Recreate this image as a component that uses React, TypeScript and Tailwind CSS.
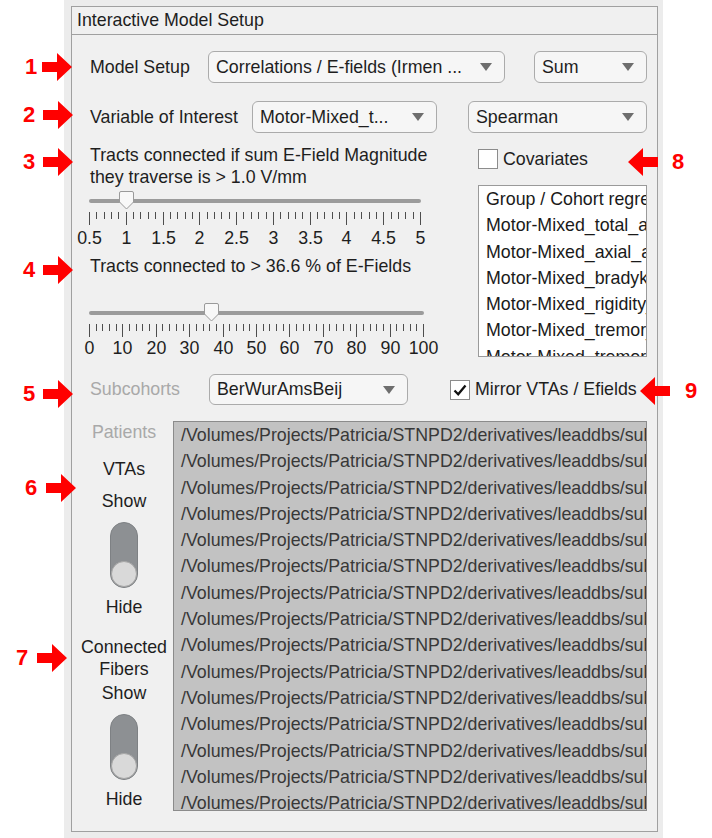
import React from 'react';

const PATH = '/Volumes/Projects/Patricia/STNPD2/derivatives/leaddbs/sub-';

const covariates = [
  'Group / Cohort regression',
  'Motor-Mixed_total_abs',
  'Motor-Mixed_axial_abs',
  'Motor-Mixed_bradykinesia_abs',
  'Motor-Mixed_rigidity_abs',
  'Motor-Mixed_tremor_abs',
  'Motor-Mixed_tremor_rest',
];

// red callouts that sit on top of the screenshot
const annots = [
  { n: '1', num: 'left-[25px] top-[53px]', arrow: 'left-[42px] top-[53px]', dir: 'r' },
  { n: '2', num: 'left-[23px] top-[101px]', arrow: 'left-[43px] top-[101px]', dir: 'r' },
  { n: '3', num: 'left-[23px] top-[148px]', arrow: 'left-[43px] top-[148px]', dir: 'r' },
  { n: '4', num: 'left-[23px] top-[256px]', arrow: 'left-[43px] top-[256px]', dir: 'r' },
  { n: '5', num: 'left-[23px] top-[380px]', arrow: 'left-[43px] top-[380px]', dir: 'r' },
  { n: '6', num: 'left-[25px] top-[474px]', arrow: 'left-[46px] top-[474px]', dir: 'r' },
  { n: '7', num: 'left-[16px] top-[644px]', arrow: 'left-[37px] top-[644px]', dir: 'r' },
  { n: '8', num: 'left-[672px] top-[148px]', arrow: 'left-[628px] top-[148px]', dir: 'l' },
  { n: '9', num: 'left-[685px] top-[377px]', arrow: 'left-[640px] top-[377px]', dir: 'l' },
];

function Arrow({ dir }: { dir: string }) {
  const pts = dir === 'r' ? '0,9 15,9 15,0 30,14 15,28 15,19 0,19' : '30,9 15,9 15,0 0,14 15,28 15,19 30,19';
  return (
    <svg width="30" height="28" viewBox="0 0 30 28">
      <polygon points={pts} fill="#ff0000" />
    </svg>
  );
}

function Caret() {
  return (
    <svg width="12" height="8" viewBox="0 0 12 8" className="shrink-0">
      <path d="M0 0 H12 L6 8 Z" fill="#6e6e6e" />
    </svg>
  );
}

function Dropdown({ text, className }: { text: string; className: string }) {
  return (
    <div className={`flex items-center h-full rounded-[6px] border border-[#ababab] bg-[#f6f6f6] pl-[7px] pr-[12px] ${className}`}>
      <span className="flex-1 whitespace-nowrap overflow-hidden">{text}</span>
      <Caret />
    </div>
  );
}

function Checkbox({ checked = false }: { checked?: boolean }) {
  return (
    <div className="w-[20px] h-[20px] shrink-0 border border-[#8c8c8c] bg-white flex items-center justify-center">
      {checked && (
        <svg width="16" height="16" viewBox="0 0 16 16">
          <path d="M2.5 8.5 L6.2 12.2 L13.5 3.5" fill="none" stroke="#111" strokeWidth="2.3" />
        </svg>
      )}
    </div>
  );
}

function Toggle() {
  return (
    <div className="w-[28px] h-[66px] rounded-full bg-[#8d9093] border border-[#7e8184] flex flex-col justify-end items-center">
      <div className="w-[26px] h-[26px] rounded-full bg-[#d9d9d9] border border-[#a6a6a6]" />
    </div>
  );
}

interface SliderProps {
  span: number;
  labels: string[];
  frac: number;
  boxClass: string;
  labelClass: string;
}

function Slider({ span, labels, frac, boxClass, labelClass }: SliderProps) {
  const majors = labels.length - 1;
  const total = majors * 5;
  const ticks = [];
  for (let i = 0; i <= total; i++) {
    const x = Math.round((i * span) / total) + 0.5;
    const major = i % 5 === 0;
    ticks.push(<line key={i} x1={x} x2={x} y1={21} y2={major ? 34 : 28} stroke="#4d4d4d" strokeWidth={1} />);
  }
  const tx = Math.round(frac * span) + 0.5;
  return (
    <div className={`relative w-[350px] -ml-[1px] ${boxClass}`}>
      <svg width={span + 4} height={36} className="absolute left-0 top-0 overflow-visible">
        <rect x={0} y={8} width={span + 1} height={4} rx={2} fill="#9b9b9b" />
        {ticks}
        <path
          d={`M${tx - 7} 2 Q${tx - 7} 0.5 ${tx - 5.5} 0.5 H${tx + 5.5} Q${tx + 7} 0.5 ${tx + 7} 2 V11 L${tx} 18 L${tx - 7} 11 Z`}
          fill="#f8f8f8"
          stroke="#9a9a9a"
        />
      </svg>
      {labels.map((l, i) => (
        <span
          key={l}
          className={`absolute leading-[20px] -translate-x-1/2 whitespace-nowrap ${labelClass}`}
          style={{ left: Math.round((i * span) / majors) + 0.5 }}
        >
          {l}
        </span>
      ))}
    </div>
  );
}

export default function App() {
  return (
    <div className="relative w-[712px] h-[838px] bg-white overflow-hidden font-['Liberation_Sans',Arial,Helvetica,sans-serif] text-[17.8px] text-[#1e1e1e]">
      <div className="ml-[64px] w-[599px] h-[838px] bg-[#ececec] pt-[6px] pl-[7px]">
        <div className="w-[587px] h-[826px] border border-[#a0a0a0] bg-[#f0f0f0] flex flex-col">
          <div className="h-[28px] border-b border-[#a0a0a0] pl-[5px] flex items-center">Interactive Model Setup</div>

          <div className="pl-[18px] pr-[10px] flex flex-col">
            {/* model setup */}
            <div className="mt-[16px] h-[32px] flex items-center">
              <div className="w-[118px]">Model Setup</div>
              <Dropdown text="Correlations / E-fields (Irmen ..." className="w-[297px]" />
              <Dropdown text="Sum" className="w-[113px] ml-[29px]" />
            </div>

            {/* variable of interest */}
            <div className="mt-[18px] h-[32px] flex items-center">
              <div className="w-[162px]">Variable of Interest</div>
              <Dropdown text="Motor-Mixed_t..." className="w-[185px]" />
              <Dropdown text="Spearman" className="w-[179px] ml-[31px]" />
            </div>

            {/* thresholds + covariates */}
            <div className="h-[225px] flex">
              <div className="w-[350px] flex flex-col">
                <div className="mt-[11px] leading-[22px]">
                  Tracts connected if sum E-Field Magnitude
                  <br />
                  they traverse is &gt; 1.0 V/mm
                </div>
                <div className="mt-[3px]">
                  <Slider
                    span={331}
                    labels={['0.5', '1', '1.5', '2', '2.5', '3', '3.5', '4', '4.5', '5']}
                    frac={0.5 / 4.5}
                    boxClass="h-[57px]"
                    labelClass="top-[37px]"
                  />
                </div>
                <div className="mt-[7px] leading-[22px]">Tracts connected to &gt; 36.6 % of E-Fields</div>
                <div className="mt-[26px]">
                  <Slider
                    span={334}
                    labels={['0', '10', '20', '30', '40', '50', '60', '70', '80', '90', '100']}
                    frac={0.366}
                    boxClass="h-[55px]"
                    labelClass="top-[35px]"
                  />
                </div>
              </div>

              <div className="ml-[38px] w-[169px] flex flex-col">
                <div className="mt-[16px] h-[20px] flex items-center gap-[5px]">
                  <Checkbox />
                  <span>Covariates</span>
                </div>
                <div className="mt-[16px] h-[172px] border border-[#9a9a9a] bg-white overflow-hidden">
                  {covariates.map((c) => (
                    <div key={c} className="h-[26.3px] leading-[26.3px] pl-[7px] whitespace-nowrap text-[#1a1a1a]">
                      {c}
                    </div>
                  ))}
                </div>
              </div>
            </div>

            {/* subcohorts */}
            <div className="mt-[16px] h-[31px] flex items-center">
              <div className="w-[119px] text-[#a9a9a9]">Subcohorts</div>
              <Dropdown text="BerWurAmsBeij" className="w-[199px]" />
              <div className="ml-[42px] flex items-center gap-[5px]">
                <Checkbox checked />
                <span>Mirror VTAs / Efields</span>
              </div>
            </div>

            {/* patients */}
            <div className="mt-[16px] -ml-[18px] flex">
              <div className="w-[101px] pl-[3px] flex flex-col items-center leading-[22px]">
                <div className="text-[#a9a9a9]">Patients</div>
                <div className="mt-[15px]">VTAs</div>
                <div className="mt-[10px]">Show</div>
                <div className="mt-[10px]">
                  <Toggle />
                </div>
                <div className="mt-[8px]">Hide</div>
                <div className="mt-[18px]">Connected</div>
                <div>Fibers</div>
                <div className="mt-[2px]">Show</div>
                <div className="mt-[10px]">
                  <Toggle />
                </div>
                <div className="mt-[8px]">Hide</div>
              </div>
              <div className="w-[474px] h-[390px] border border-[#8b8b8b] bg-[#c2c2c2] overflow-hidden">
                {Array.from({ length: 15 }).map((_, i) => (
                  <div key={i} className="h-[26.3px] leading-[26.3px] pl-[7px] whitespace-nowrap text-[#383838]">
                    {PATH + String(i + 1).padStart(3, '0')}
                  </div>
                ))}
              </div>
            </div>
          </div>
        </div>
      </div>

      {annots.map((a) => (
        <React.Fragment key={a.n}>
          <div className={`absolute h-[28px] leading-[28px] text-[22px] font-bold text-[#ff0000] ${a.num}`}>{a.n}</div>
          <div className={`absolute ${a.arrow}`}>
            <Arrow dir={a.dir} />
          </div>
        </React.Fragment>
      ))}
    </div>
  );
}
